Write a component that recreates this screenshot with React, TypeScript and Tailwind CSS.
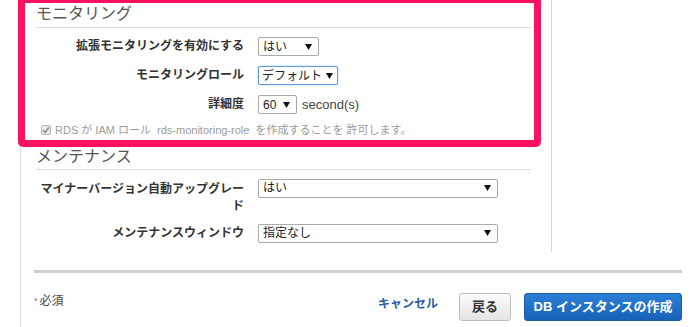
import React from 'react'

const font = { fontFamily: '"Liberation Sans", "Noto Sans CJK JP", sans-serif' }

function Arrow() {
  return (
    <svg width="7" height="6" viewBox="0 0 7 6" className="shrink-0">
      <polygon points="0,0 7,0 3.5,6" fill="#111" />
    </svg>
  )
}

function FakeSelect({ value, width, focused }: { value: string; width: string; focused?: boolean }) {
  return (
    <div
      className={`${width} h-[19px] flex items-center justify-between gap-[4px] bg-white rounded-[2px] text-[12px] text-[#222] leading-none whitespace-nowrap ${
        focused
          ? 'pl-[3px] pr-[4px] border border-[#5d9be0] shadow-[0_0_2px_#9cc3f0]'
          : 'pl-[4px] pr-[6px] border border-[#a9a9a9]'
      }`}
    >
      <span>{value}</span>
      <Arrow />
    </div>
  )
}

function Row({ label, children }: { label: string; children: React.ReactNode }) {
  return (
    <div className="flex items-center gap-[14px]">
      <div className="w-[208px] text-right text-[12px] font-bold text-[#333] leading-[17px]">{label}</div>
      {children}
    </div>
  )
}

export default function App() {
  return (
    <div className="relative w-[700px] h-[327px] bg-white overflow-hidden" style={font}>
      <div className="ml-[20px] h-full border-l border-[#dcdcdc]">
        {/* form panel */}
        <div className="w-[531px] h-[252px] border-r border-[#d4d4d4] pl-[15px] pr-[20px]">
          {/* モニタリング */}
          <div className="pt-[4px] pb-[3px] text-[16px] leading-[20px] text-[#555] border-b border-[#dddddd]">
            モニタリング
          </div>
          <div className="mt-[9px] flex flex-col gap-[10px]">
            <Row label="拡張モニタリングを有効にする">
              <FakeSelect value="はい" width="w-[61px]" />
            </Row>
            <Row label="モニタリングロール">
              <FakeSelect value="デフォルト" width="w-[80px]" focused />
            </Row>
            <Row label="詳細度">
              <FakeSelect value="60" width="w-[39px]" />
              <span className="-ml-[9px] text-[13px] text-[#444]">second(s)</span>
            </Row>
          </div>
          <div className="mt-[8px] ml-[5px] flex items-center gap-[4px] h-[14px] text-[11px] text-[#9a9a9a] leading-[14px]">
            <svg width="10" height="10" viewBox="0 0 10 10" className="shrink-0">
              <rect x="0.5" y="0.5" width="9" height="9" rx="1.5" fill="#e8e8e8" stroke="#b5b5b5" />
              <path d="M2.2 5.2 L4.2 7.2 L7.9 2.6" stroke="#8a8a8a" strokeWidth="1.6" fill="none" />
            </svg>
            <span>RDS が IAM ロール&nbsp; rds-monitoring-role&nbsp; を作成することを 許可します。</span>
          </div>

          {/* メンテナンス */}
          <div className="mt-[6px] pt-[4px] pb-[2px] text-[16px] leading-[20px] text-[#555] border-b border-[#dddddd]">
            メンテナンス
          </div>
          <div className="mt-[9px] flex flex-col gap-[9px]">
            <div className="flex items-start gap-[14px]">
              <div className="w-[208px] pt-[2px] text-right text-[12px] font-bold text-[#333] leading-[17px]">
                マイナーバージョン自動アップグレード
              </div>
              <FakeSelect value="はい" width="w-[240px]" />
            </div>
            <Row label="メンテナンスウィンドウ">
              <FakeSelect value="指定なし" width="w-[240px]" />
            </Row>
          </div>
        </div>

        {/* footer */}
        <div className="ml-[13px] w-[648px] mt-[18px]">
          <div className="h-[3px] bg-[#d0d0d0]" />
          <div className="mt-[20px] flex items-start justify-between">
            <div className="pt-[1px] text-[12px] text-[#444] leading-[14px] flex items-start gap-[2px]">
              <span className="text-[9px] text-[#8a6a9a]">*</span>
              <span>必須</span>
            </div>
            <div className="flex items-center h-[28px]">
              <span className="-mt-[6px] text-[12px] font-bold text-[#2a5ea6]">キャンセル</span>
              <button className="ml-[21px] w-[52px] h-[28px] rounded-[3px] border border-[#bdbdbd] bg-gradient-to-b from-[#fbfbfb] to-[#e4e4e4] text-[13px] font-bold text-[#333]">
                戻る
              </button>
              <button className="ml-[13px] w-[158px] h-[28px] rounded-[3px] border border-[#1a5aa6] bg-gradient-to-b from-[#2b7fd6] to-[#1862b8] text-[13px] font-bold text-white">
                DB インスタンスの作成
              </button>
            </div>
          </div>
        </div>
      </div>

      {/* annotation box */}
      <div className="absolute left-[18px] top-[-4px] w-[523px] h-[151px] border-[7px] border-[#ff1160] rounded-[5px] pointer-events-none" />
    </div>
  )
}
